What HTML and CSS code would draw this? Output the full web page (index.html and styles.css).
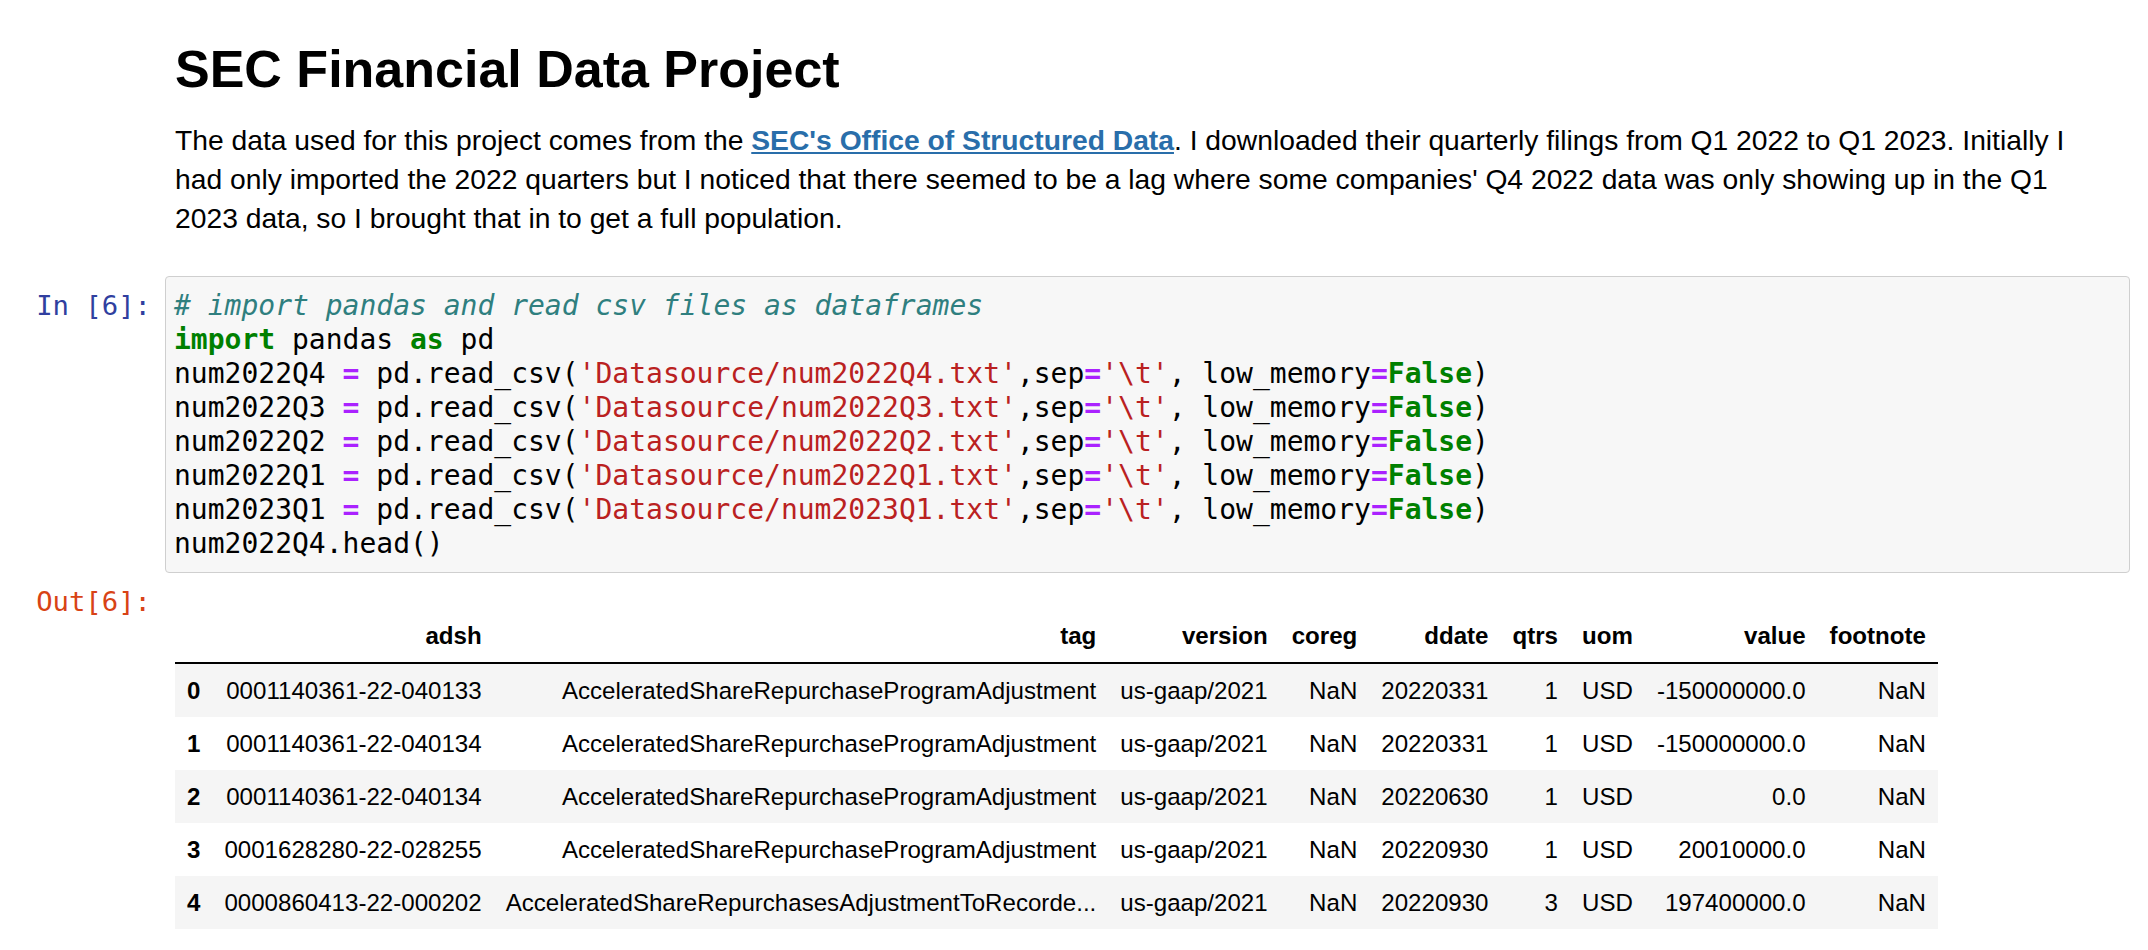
FILE: index.html
```html
<!DOCTYPE html>
<html lang="en">
<head>
<meta charset="utf-8">
<title>SEC Financial Data Project</title>
<link rel="stylesheet" href="styles.css">
</head>
<body>
<div class="notebook">
  <div class="cell text-cell">
    <div class="prompt"></div>
    <div class="md">
      <h1 class="title">SEC Financial Data Project</h1>
      <p class="para">The data used for this project comes from the <a class="link" href="#">SEC's Office of Structured Data</a>. I downloaded their quarterly filings from Q1 2022 to Q1 2023. Initially I had only imported the 2022 quarters but I noticed that there seemed to be a lag where some companies' Q4 2022 data was only showing up in the Q1 2023 data, so I brought that in to get a full population.</p>
    </div>
  </div>

  <div class="cell code-cell">
    <div class="prompt in-prompt">In&nbsp;[6]:</div>
    <div class="input-area">
      <div class="code">
        <div class="line"><span class="c"># import pandas and read csv files as dataframes</span></div>
        <div class="line"><span class="k">import</span><span> pandas </span><span class="k">as</span><span> pd</span></div>
        <div class="line"><span>num2022Q4 </span><span class="o">=</span><span> pd.read_csv(</span><span class="s">'Datasource/num2022Q4.txt'</span><span>,sep</span><span class="o">=</span><span class="s">'\t'</span><span>, low_memory</span><span class="o">=</span><span class="k">False</span><span>)</span></div>
        <div class="line"><span>num2022Q3 </span><span class="o">=</span><span> pd.read_csv(</span><span class="s">'Datasource/num2022Q3.txt'</span><span>,sep</span><span class="o">=</span><span class="s">'\t'</span><span>, low_memory</span><span class="o">=</span><span class="k">False</span><span>)</span></div>
        <div class="line"><span>num2022Q2 </span><span class="o">=</span><span> pd.read_csv(</span><span class="s">'Datasource/num2022Q2.txt'</span><span>,sep</span><span class="o">=</span><span class="s">'\t'</span><span>, low_memory</span><span class="o">=</span><span class="k">False</span><span>)</span></div>
        <div class="line"><span>num2022Q1 </span><span class="o">=</span><span> pd.read_csv(</span><span class="s">'Datasource/num2022Q1.txt'</span><span>,sep</span><span class="o">=</span><span class="s">'\t'</span><span>, low_memory</span><span class="o">=</span><span class="k">False</span><span>)</span></div>
        <div class="line"><span>num2023Q1 </span><span class="o">=</span><span> pd.read_csv(</span><span class="s">'Datasource/num2023Q1.txt'</span><span>,sep</span><span class="o">=</span><span class="s">'\t'</span><span>, low_memory</span><span class="o">=</span><span class="k">False</span><span>)</span></div>
        <div class="line"><span>num2022Q4.head()</span></div>
      </div>
    </div>
  </div>

  <div class="cell output-cell">
    <div class="prompt out-prompt">Out[6]:</div>
    <div class="output">
      <table class="df">
        <thead>
          <tr><th></th><th>adsh</th><th>tag</th><th>version</th><th>coreg</th><th>ddate</th><th>qtrs</th><th>uom</th><th>value</th><th>footnote</th></tr>
        </thead>
        <tbody>
          <tr><th>0</th><td>0001140361-22-040133</td><td>AcceleratedShareRepurchaseProgramAdjustment</td><td>us-gaap/2021</td><td>NaN</td><td>20220331</td><td>1</td><td>USD</td><td>-150000000.0</td><td>NaN</td></tr>
          <tr><th>1</th><td>0001140361-22-040134</td><td>AcceleratedShareRepurchaseProgramAdjustment</td><td>us-gaap/2021</td><td>NaN</td><td>20220331</td><td>1</td><td>USD</td><td>-150000000.0</td><td>NaN</td></tr>
          <tr><th>2</th><td>0001140361-22-040134</td><td>AcceleratedShareRepurchaseProgramAdjustment</td><td>us-gaap/2021</td><td>NaN</td><td>20220630</td><td>1</td><td>USD</td><td>0.0</td><td>NaN</td></tr>
          <tr><th>3</th><td>0001628280-22-028255</td><td>AcceleratedShareRepurchaseProgramAdjustment</td><td>us-gaap/2021</td><td>NaN</td><td>20220930</td><td>1</td><td>USD</td><td>20010000.0</td><td>NaN</td></tr>
          <tr><th>4</th><td>0000860413-22-000202</td><td>AcceleratedShareRepurchasesAdjustmentToRecorde...</td><td>us-gaap/2021</td><td>NaN</td><td>20220930</td><td>3</td><td>USD</td><td>197400000.0</td><td>NaN</td></tr>
        </tbody>
      </table>
    </div>
  </div>
</div>
</body>
</html>
```

FILE: styles.css
```css
html, body {
  margin: 0;
  padding: 0;
  background: #ffffff;
  overflow: hidden;
}

body {
  font-family: "Liberation Sans", Arial, Helvetica, sans-serif;
  color: #000000;
}

.notebook {
  width: 2130px;
  display: flex;
  flex-direction: column;
}

.cell {
  display: flex;
  flex-direction: row;
  align-items: flex-start;
}

.prompt {
  flex: 0 0 165px;
  width: 165px;
  box-sizing: border-box;
  padding-right: 14px;
  text-align: right;
  font-family: "DejaVu Sans Mono", "Liberation Mono", monospace;
  font-size: 27.25px;
  line-height: 34px;
  white-space: nowrap;
}

/* markdown cell */
.text-cell {
  padding-top: 39px;
}

.md {
  flex: 1;
  padding-left: 10px;
  padding-right: 40px;
}

.title {
  margin: 0;
  font-size: 52px;
  font-weight: bold;
  line-height: normal;
}

.para {
  margin: 22px 0 0 0;
  font-size: 28.25px;
  line-height: 39px;
}

.link {
  color: #296eaa;
  font-weight: bold;
  text-decoration: underline;
}

/* code cell */
.code-cell {
  margin-top: 38px;
}

.in-prompt {
  color: #303f9f;
  padding-top: 13px;
}

.input-area {
  flex: 1;
  background: #f7f7f7;
  border: 1px solid #cfcfcf;
  border-radius: 4px;
  padding: 12px 8px 11px 8px;
}

.code {
  font-family: "DejaVu Sans Mono", "Liberation Mono", monospace;
  font-size: 28px;
  line-height: 34px;
  color: #000000;
}

.code .line {
  white-space: pre;
  height: 34px;
}

.code .c {
  color: #2f7f7f;
  font-style: italic;
}

.code .k {
  color: #008000;
  font-weight: bold;
}

.code .o {
  color: #aa22ff;
  font-weight: bold;
}

.code .s {
  color: #ba2121;
}

/* output cell */
.out-prompt {
  color: #d84315;
  padding-top: 12px;
}

.output {
  flex: 1;
  padding-top: 36px;
  padding-left: 10px;
}

.df {
  border-collapse: collapse;
  border-spacing: 0;
  font-size: 24.1px;
  line-height: 29px;
  color: #000000;
}

.df th,
.df td {
  padding: 12px;
  text-align: right;
  vertical-align: middle;
  white-space: nowrap;
}

.df thead th {
  font-weight: bold;
  vertical-align: bottom;
  border-bottom: 2px solid #000000;
}

.df tbody th {
  font-weight: bold;
}

.df tbody tr:nth-child(odd) {
  background: #f5f5f5;
}
```
